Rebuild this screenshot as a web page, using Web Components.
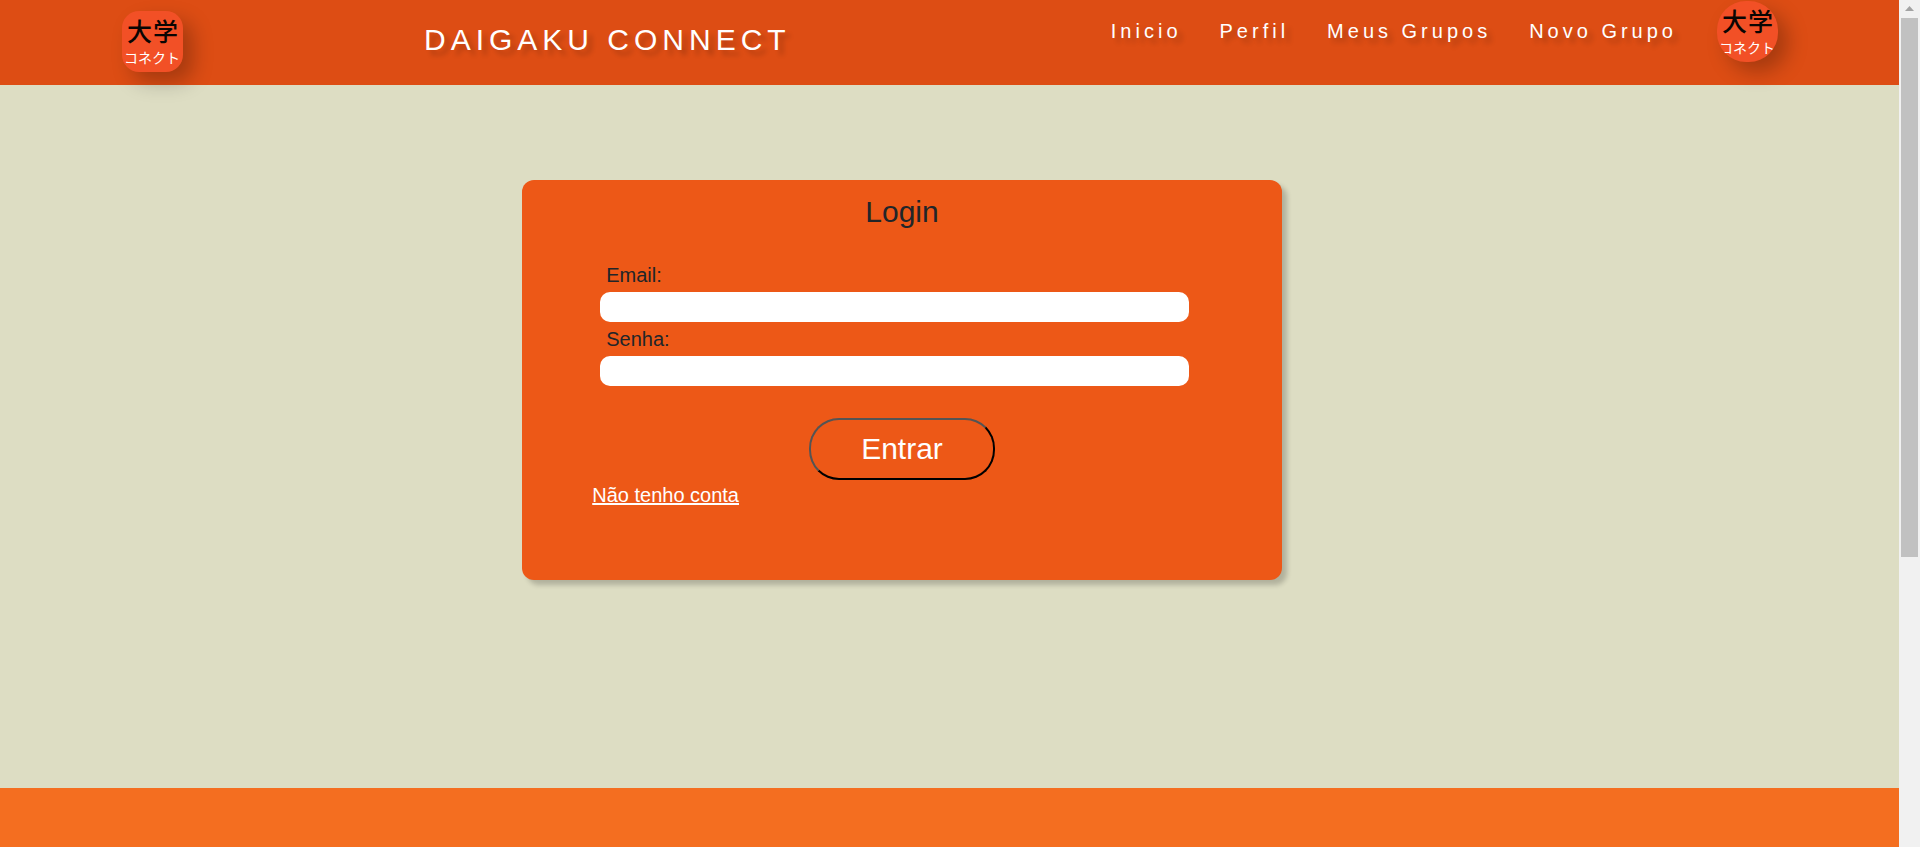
<!DOCTYPE html>
<html lang="pt-BR">
<head>
<meta charset="utf-8">
<meta name="viewport" content="width=device-width, initial-scale=1">
<title>Daigaku Connect - Login</title>
<style>
  body { margin: 0; background: #ddddc3; color: #212529; font: 20px/30px "Liberation Sans", Arial, sans-serif; }
</style>
</head>
<body>
<app-shell>
  <site-header slot="header">
    Daigaku Connect
    <nav-link slot="nav" href="#inicio">Inicio</nav-link>
    <nav-link slot="nav" href="#perfil">Perfil</nav-link>
    <nav-link slot="nav" href="#meus-grupos">Meus Grupos</nav-link>
    <nav-link slot="nav" href="#novo-grupo">Novo Grupo</nav-link>
  </site-header>
  <login-card>
    <span slot="title">Login</span>
    <login-field type="email" name="email">Email:</login-field>
    <login-field type="password" name="senha">Senha:</login-field>
    <span slot="submit">Entrar</span>
    <span slot="link">Não tenho conta</span>
  </login-card>
  <site-footer slot="footer"></site-footer>
</app-shell>
<script>
  const define = (name, html, setup) => {
    const template = document.createElement('template');
    template.innerHTML = html;
    customElements.define(name, class extends HTMLElement {
      constructor() {
        super();
        this.attachShadow({ mode: 'open' }).append(template.content.cloneNode(true));
      }
      connectedCallback() {
        if (setup) setup(this, this.shadowRoot);
      }
    });
  };

  define('scroll-track', `
    <style>
      :host { display: flex; flex-direction: column; align-items: center; width: 21px; height: 100vh; position: sticky; top: 0; background: #f1f1f1; }
      svg { display: block; width: 21px; height: 18px; }
      div { width: 17px; height: 63.6%; background: #c1c1c1; }
    </style>
    <svg viewBox="0 0 21 18" aria-hidden="true"><path d="M6 11L10.500 6L15 11Z" fill="#a3a3a3"/></svg>
    <div></div>`);

  define('app-shell', `
    <style>
      :host { display: flex; min-height: 100vh; }
      .page { flex: 1; min-width: 0; display: flex; flex-direction: column; }
      main { padding: 95px 0 208px; }
      ::slotted(site-footer) { flex: 1; }
    </style>
    <div class="page">
      <slot name="header"></slot>
      <main><slot></slot></main>
      <slot name="footer"></slot>
    </div>
    <scroll-track></scroll-track>`);

  define('brand-logo', `
    <style>
      :host { display: block; flex: none; width: 61px; height: 61px; border-radius: 17px; overflow: hidden; background: #f25026; box-shadow: 10px 10px 20px rgba(0, 0, 0, .25); }
      :host([round]) { border-radius: 29px; }
      svg { display: block; }
      text { font-family: "Noto Sans CJK JP", sans-serif; }
    </style>
    <svg width="61" height="61" viewBox="0 0 61 61" role="img" aria-label="Daigaku Connect">
      <text x="5 31" y="30" font-size="25" font-weight="500" fill="#0a0503">大学</text>
      <text x="2 16 30 44" y="52" font-size="14" fill="#fff">コネクト</text>
    </svg>`);

  define('nav-link', `
    <style>
      :host { display: block; }
      a { color: #fff; text-decoration: none; letter-spacing: 4px; text-shadow: 5px 5px 5px rgba(0, 0, 0, .2); white-space: nowrap; }
    </style>
    <a><slot></slot></a>`,
    (host, root) => { root.querySelector('a').href = host.getAttribute('href'); });

  define('site-header', `
    <style>
      :host { display: block; }
      header { box-sizing: border-box; min-height: 85px; display: flex; align-items: flex-start; padding: 1px 121px 0 122px; background: #dd4d14; }
      .start { margin-top: 10px; }
      h1 { margin: 19px 0 0 241px; font-size: 30px; line-height: 40px; font-weight: 400; letter-spacing: 5px; text-transform: uppercase; color: #fff; text-shadow: 5px 5px 5px rgba(0, 0, 0, .2); white-space: nowrap; }
      nav { margin: 15px 40px 0 auto; display: flex; gap: 38px; }
    </style>
    <header>
      <brand-logo class="start"></brand-logo>
      <h1><slot></slot></h1>
      <nav><slot name="nav"></slot></nav>
      <brand-logo round></brand-logo>
    </header>`);

  define('login-field', `
    <style>
      :host { display: flex; flex-direction: column; gap: 2px; }
      label { padding-left: 6px; }
      input { box-sizing: border-box; width: 100%; height: 30px; padding: 0 10px; border: 0; border-radius: 10px; background: #fff; font: inherit; }
    </style>
    <label for="field"><slot></slot></label>
    <input id="field">`,
    (host, root) => {
      const input = root.querySelector('input');
      input.type = host.getAttribute('type');
      input.name = host.getAttribute('name');
    });

  define('login-card', `
    <style>
      :host { display: block; box-sizing: border-box; width: 40%; margin-left: 27.5%; padding: 12px 0 70px; border-radius: 12px; background: #ed5817; box-shadow: 5px 5px 5px rgba(0, 0, 0, .2); }
      h2 { margin: 0 0 28px; text-align: center; font-size: 30px; line-height: 40px; font-weight: 400; }
      form { display: flex; flex-direction: column; }
      .fields { display: flex; flex-direction: column; gap: 2px; padding: 0 93px 0 78px; }
      button { align-self: center; margin-top: 32px; width: 186px; height: 62px; border: 2px outset #000; border-radius: 30px; background: transparent; color: #fff; font: inherit; font-size: 30px; }
      a { align-self: flex-start; margin-left: 70px; color: #fff; }
    </style>
    <h2><slot name="title"></slot></h2>
    <form>
      <div class="fields"><slot></slot></div>
      <button type="submit"><slot name="submit"></slot></button>
      <a href="#cadastro"><slot name="link"></slot></a>
    </form>`);

  define('site-footer', `
    <style>
      :host { display: block; background: #f46e20; }
      footer { min-height: 59px; }
    </style>
    <footer></footer>`);
</script>
</body>
</html>
